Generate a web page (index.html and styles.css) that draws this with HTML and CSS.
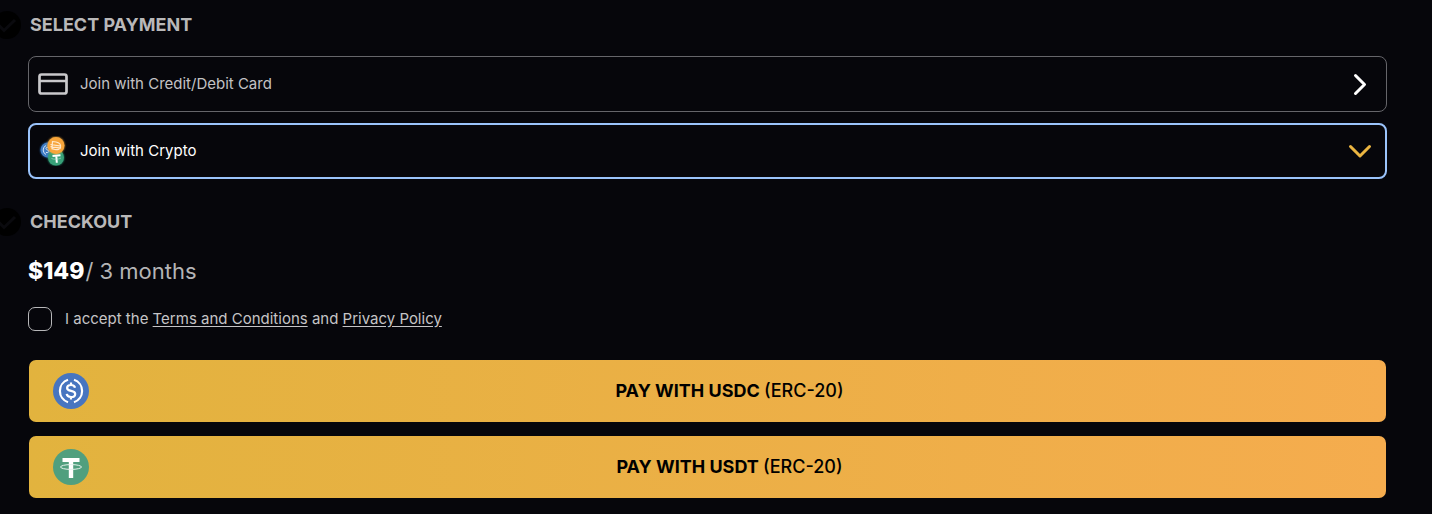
FILE: index.html
```html
<!DOCTYPE html>
<html lang="en">
<head>
<meta charset="utf-8">
<meta name="viewport" content="width=device-width, initial-scale=1">
<title>Select payment</title>
<link rel="stylesheet" href="styles.css">
</head>
<body>
<main class="page">
  <section class="payment">
    <h2 class="step">
      <svg class="step-badge" viewBox="0 0 28 28" aria-hidden="true"><circle cx="14" cy="14" r="14" fill="#000"/><path d="M6 14.500l5 5L22 9" fill="none" stroke="#0a0a0e" stroke-width="3"/></svg>
      <span>SELECT PAYMENT</span>
    </h2>
    <div class="methods">
      <button class="method" type="button">
        <svg class="method-icon" viewBox="0 0 30 30" aria-hidden="true"><rect x="1.500" y="5.500" width="27" height="19" rx="2" fill="none" stroke="#c9c8cb" stroke-width="2.700"/><path d="M2 12h26" stroke="#c9c8cb" stroke-width="2.500"/></svg>
        <span class="method-label">Join with Credit/Debit Card</span>
        <svg class="chevron" viewBox="0 0 24 24" aria-hidden="true"><path d="M7.500 3.500L16.500 12.500 7.500 21.500" fill="none" stroke="#fff" stroke-width="3" stroke-linecap="round" stroke-linejoin="round"/></svg>
      </button>
      <button class="method method-selected" type="button">
        <svg class="method-icon" viewBox="0 0 30 30" aria-hidden="true">
          <circle class="glow-blue" cx="10" cy="14" r="7.500" fill="#3f7cc4"/>
          <path d="M8 9.500a5 5 0 0 0 0 9M11 11.500c-4-1-3.500 2-1.500 2.500s2 3-1.500 2.500" fill="none" stroke="#d5e6fa" stroke-width="1"/>
          <circle class="glow-green" cx="18" cy="21.500" r="8" fill="#38a078"/>
          <circle class="glow-gold" cx="18" cy="9.500" r="8.500" fill="#f7a53b"/>
          <path d="M14.500 20l8-.8M18.300 19.800l.5 7" stroke="#fff" stroke-width="2"/>
          <path d="M13.500 22.500c2 1.200 7.500 1 9.500-.5" fill="none" stroke="#b6e2d2" stroke-width=".6"/>
          <path d="M14.500 5.500l3.500.5c3 .7 5 2.500 4.500 5s-3 3-5.500 2.500l-3-.8zM12.500 8.500l10.500 1.600M12.500 10.700l10.500 1.500" fill="none" stroke="#ffe9cc" stroke-width="1.200"/>
        </svg>
        <span class="method-label">Join with Crypto</span>
        <svg class="chevron" viewBox="0 0 24 24" aria-hidden="true"><path d="M2.500 7.500L12 17l9.500-9.500" fill="none" stroke="#ebb541" stroke-width="3" stroke-linecap="round" stroke-linejoin="round"/></svg>
      </button>
    </div>
  </section>
  <section class="checkout">
    <h2 class="step">
      <svg class="step-badge" viewBox="0 0 28 28" aria-hidden="true"><circle cx="14" cy="14" r="14" fill="#000"/><path d="M6 14.500l5 5L22 9" fill="none" stroke="#0a0a0e" stroke-width="3"/></svg>
      <span>CHECKOUT</span>
    </h2>
    <p class="price"><strong class="amount">$149</strong><span class="period">/ 3 months</span></p>
    <div class="terms">
      <input class="terms-box" id="accept" type="checkbox">
      <label for="accept">I accept the <a href="#terms">Terms and Conditions</a> and <a href="#privacy">Privacy Policy</a></label>
    </div>
    <div class="actions">
      <button class="pay" type="button">
        <svg class="coin" viewBox="0 0 36 36" aria-hidden="true">
          <circle cx="18" cy="18" r="18" fill="#4775c0"/>
          <path d="M15 6.800a11.800 11.800 0 0 0 0 22.400M21 6.800a11.800 11.800 0 0 1 0 22.400" fill="none" stroke="#fff" stroke-width="2.200"/>
          <path d="M22 14.800c-.3-1.800-1.800-2.800-4-2.800s-3.900 1.100-3.900 2.900c0 4.300 8.100 1.700 8.100 6 0 1.900-1.700 3.100-4.200 3.100-2.400 0-4-1.100-4.300-3.100M18 9.500V12M18 24v2.500" fill="none" stroke="#fff" stroke-width="2.200"/>
        </svg>
        <span class="pay-label">PAY WITH USDC <span class="network">(ERC-20)</span></span>
      </button>
      <button class="pay" type="button">
        <svg class="coin" viewBox="0 0 36 36" aria-hidden="true">
          <circle cx="18" cy="18" r="18" fill="#509f7e"/>
          <path d="M9.500 9h17v4h-6.300v16h-4.400V13H9.500z" fill="#fff"/>
          <ellipse cx="18" cy="18" rx="10.500" ry="2.400" fill="none" stroke="#e5f3ed" stroke-width="1"/>
        </svg>
        <span class="pay-label">PAY WITH USDT <span class="network">(ERC-20)</span></span>
      </button>
    </div>
  </section>
</main>
</body>
</html>
```
FILE: styles.css
```css
* {
  box-sizing: border-box;
}

body {
  margin: 0;
  background: #06060b;
  color: #bbb;
  font-family: Inter, "Liberation Sans", sans-serif;
  font-size: 15px;
  line-height: 24px;
}

button {
  font: inherit;
  cursor: pointer;
}

.page {
  padding: 11px 45px 16px 28px;
  overflow: hidden;
}

.step {
  display: flex;
  align-items: center;
  gap: 9px;
  margin: 0 0 17px -35px;
  color: #b9b8b9;
  font-size: 18px;
  font-weight: 700;
  line-height: 28px;
}

.step-badge {
  width: 28px;
  height: 28px;
}

.methods {
  display: grid;
  gap: 11px;
}

.method {
  display: flex;
  align-items: center;
  gap: 12px;
  width: 100%;
  height: 56px;
  padding: 0 14px 0 9px;
  border: 1px solid #65656a;
  border-radius: 8px;
  background: transparent;
  color: #c3c2c4;
  text-align: left;
}

.method-selected {
  padding: 0 13px 0 8px;
  border: 2px solid #9ac3fb;
  color: #fff;
}

.method-icon {
  width: 30px;
  height: 30px;
}

.glow-blue {
  filter: drop-shadow(0 0 1px #2775ca);
}

.glow-green {
  filter: drop-shadow(0 0 1px #26a17b);
}

.glow-gold {
  filter: drop-shadow(0 0 1px #f5ac37);
}

.method-label {
  flex: 1;
}

.chevron {
  width: 24px;
  height: 24px;
}

.checkout {
  margin-top: 29px;
}

.checkout .step {
  margin-bottom: 19px;
}

.price {
  display: flex;
  align-items: center;
  gap: 1px;
  margin: 0 0 20px;
  line-height: 32px;
}

.amount {
  color: #fff;
  font-size: 23px;
  font-weight: 800;
}

.period {
  color: #b4b4b6;
  font-size: 22px;
}

.terms {
  display: flex;
  align-items: center;
  gap: 13px;
  margin-bottom: 29px;
  color: #c5c4c6;
}

.terms-box {
  appearance: none;
  width: 24px;
  height: 24px;
  margin: 0;
  border: 1px solid #b7b7b9;
  border-radius: 7px;
}

.terms-box:checked {
  background: #ebb541;
}

.terms a {
  color: inherit;
  text-underline-offset: 2px;
}

.actions {
  display: grid;
  gap: 14px;
  padding: 0 1px;
}

.pay {
  display: flex;
  align-items: center;
  width: 100%;
  height: 62px;
  padding: 0 16px 0 24px;
  border: 0;
  border-radius: 7px;
  background: linear-gradient(90deg, #e2b33e, #f5ac4e);
  color: #000;
  font-size: 18px;
  font-weight: 700;
}

.coin {
  width: 36px;
  height: 36px;
}

.pay-label {
  flex: 1;
  text-align: center;
}

.network {
  font-weight: 500;
}
```
